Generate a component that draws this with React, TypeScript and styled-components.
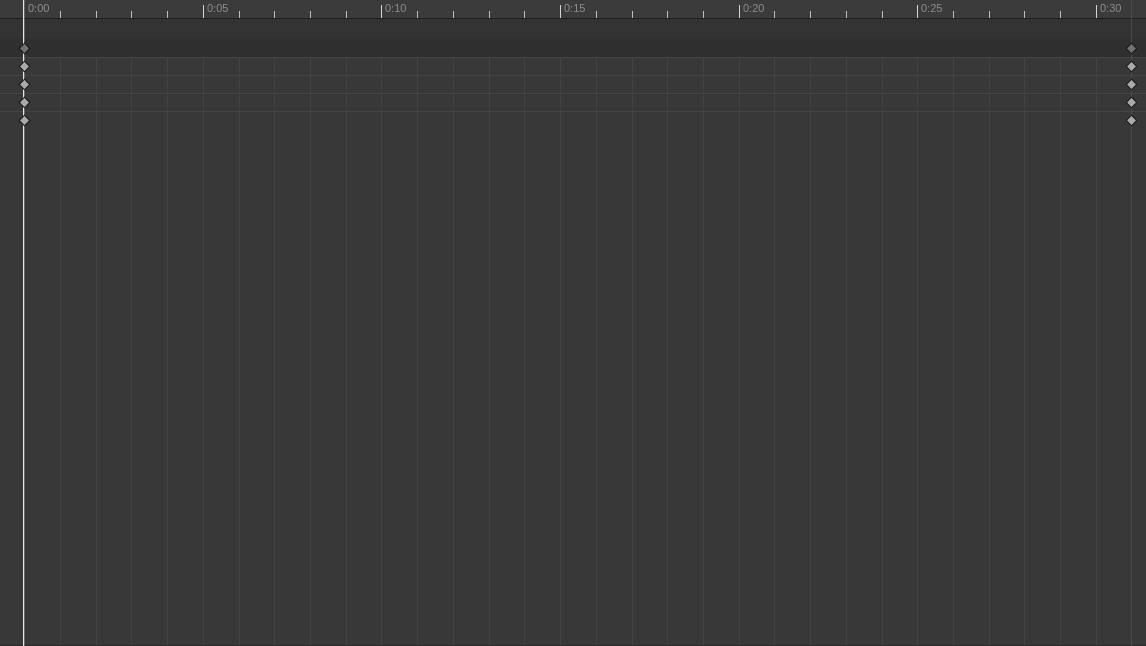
import React from "react";
import styled, { createGlobalStyle } from "styled-components";

const PPS = 35.73;
const DURATION = 31;
const SECONDS = Array.from({ length: DURATION }, (_, i) => i);

const GlobalStyle = createGlobalStyle`
  html, body { margin: 0; padding: 0; background: #383838; overflow: hidden; }
  #root { height: 100vh; }
`;

const Timeline = styled.div`
  position: relative;
  display: flex;
  flex-direction: column;
  width: 100%;
  height: 646px;
  background: #383838;
  font-family: "Liberation Sans", Arial, sans-serif;
  overflow: hidden;
`;

const Ruler = styled.div`
  flex: 0 0 18px;
  display: flex;
  padding-left: 24.3px;
  background: #3b3b3b;
  border-bottom: 1px solid #1f1f1f;
`;

const SecondCell = styled.div`
  flex: 0 0 ${PPS}px;
  display: flex;
  align-items: flex-end;
  height: 100%;
`;

const Tick = styled.div<{ $major?: boolean; $hidden?: boolean }>`
  flex: 0 0 1px;
  height: ${(p) => (p.$major ? 13 : 7)}px;
  background: ${(p) => (p.$hidden ? "transparent" : p.$major ? "#d4d4d4" : "#bdbdbd")};
`;

const TickLabel = styled.span`
  align-self: flex-start;
  margin: 2px 0 0 3px;
  font-size: 11px;
  line-height: 13px;
  color: #8c8c8c;
  white-space: nowrap;
  will-change: transform;
  -webkit-font-smoothing: antialiased;
`;

const Band = styled.div<{ $tone: string; $offset?: number }>`
  flex: 0 0 19px;
  box-sizing: border-box;
  display: flex;
  align-items: center;
  justify-content: space-between;
  padding: ${(p) => p.$offset ?? 0}px 8px 0 18px;
  background: ${(p) => p.$tone};
`;

const Tracks = styled.div`
  position: relative;
  flex: 1;
  display: flex;
  flex-direction: column;
`;

const GridLayer = styled.div`
  position: absolute;
  inset: 0;
  display: flex;
  padding-left: 24.3px;
  pointer-events: none;
`;

const GridCell = styled.div`
  flex: 0 0 ${PPS}px;
  box-sizing: border-box;
  border-left: 1px solid #434343;
`;

const Track = styled.div`
  position: relative;
  height: 18px;
  box-sizing: border-box;
  display: flex;
  align-items: center;
  justify-content: space-between;
  padding: 0 8px 0 18px;
  border-top: 1px solid #444444;
`;

const Diamond = styled.svg`
  display: block;
  width: 13px;
  height: 13px;
  flex: 0 0 13px;
  position: relative;
  z-index: 4;
`;

const Playhead = styled.div`
  position: absolute;
  top: 0;
  bottom: 0;
  left: 23px;
  width: 1px;
  background: #e6e6e6;
  box-shadow: 1px 0 0 rgba(150, 150, 150, 0.45);
  z-index: 3;
`;

const EndMarker = styled.div`
  position: absolute;
  top: 0;
  bottom: 0;
  left: 1131px;
  width: 1px;
  background: #4b4b4b;
  z-index: 1;
`;

const BottomEdge = styled.div`
  flex: 0 0 1px;
  background: #2a2a2a;
`;

function Keyframe({ dim }: { dim?: boolean }) {
  return (
    <Diamond viewBox="0 0 13 13">
      <polygon
        points="6.5,1.2 11.8,6.5 6.5,11.8 1.2,6.5"
        fill={dim ? "#727272" : "#aaaaaa"}
        stroke="#1c1c1c"
        strokeWidth="1.1"
        strokeLinejoin="miter"
      />
    </Diamond>
  );
}

export default function App() {
  return (
    <>
      <GlobalStyle />
      <Timeline>
        <Ruler>
          {SECONDS.map((s) => (
            <SecondCell key={s}>
              <Tick $major={s % 5 === 0} $hidden={s === 0} />
              {s % 5 === 0 && <TickLabel>0:{String(s).padStart(2, "0")}</TickLabel>}
            </SecondCell>
          ))}
        </Ruler>
        <Band $tone="#333333" />
        <Band $tone="#2f2f2f" $offset={1}>
          <Keyframe dim />
          <Keyframe dim />
        </Band>
        <Tracks>
          <GridLayer>
            {SECONDS.map((s) => (
              <GridCell key={s} />
            ))}
          </GridLayer>
          {[0, 1, 2, 3].map((i) => (
            <Track key={i}>
              <Keyframe />
              <Keyframe />
            </Track>
          ))}
        </Tracks>
        <BottomEdge />
        <EndMarker />
        <Playhead />
      </Timeline>
    </>
  );
}
